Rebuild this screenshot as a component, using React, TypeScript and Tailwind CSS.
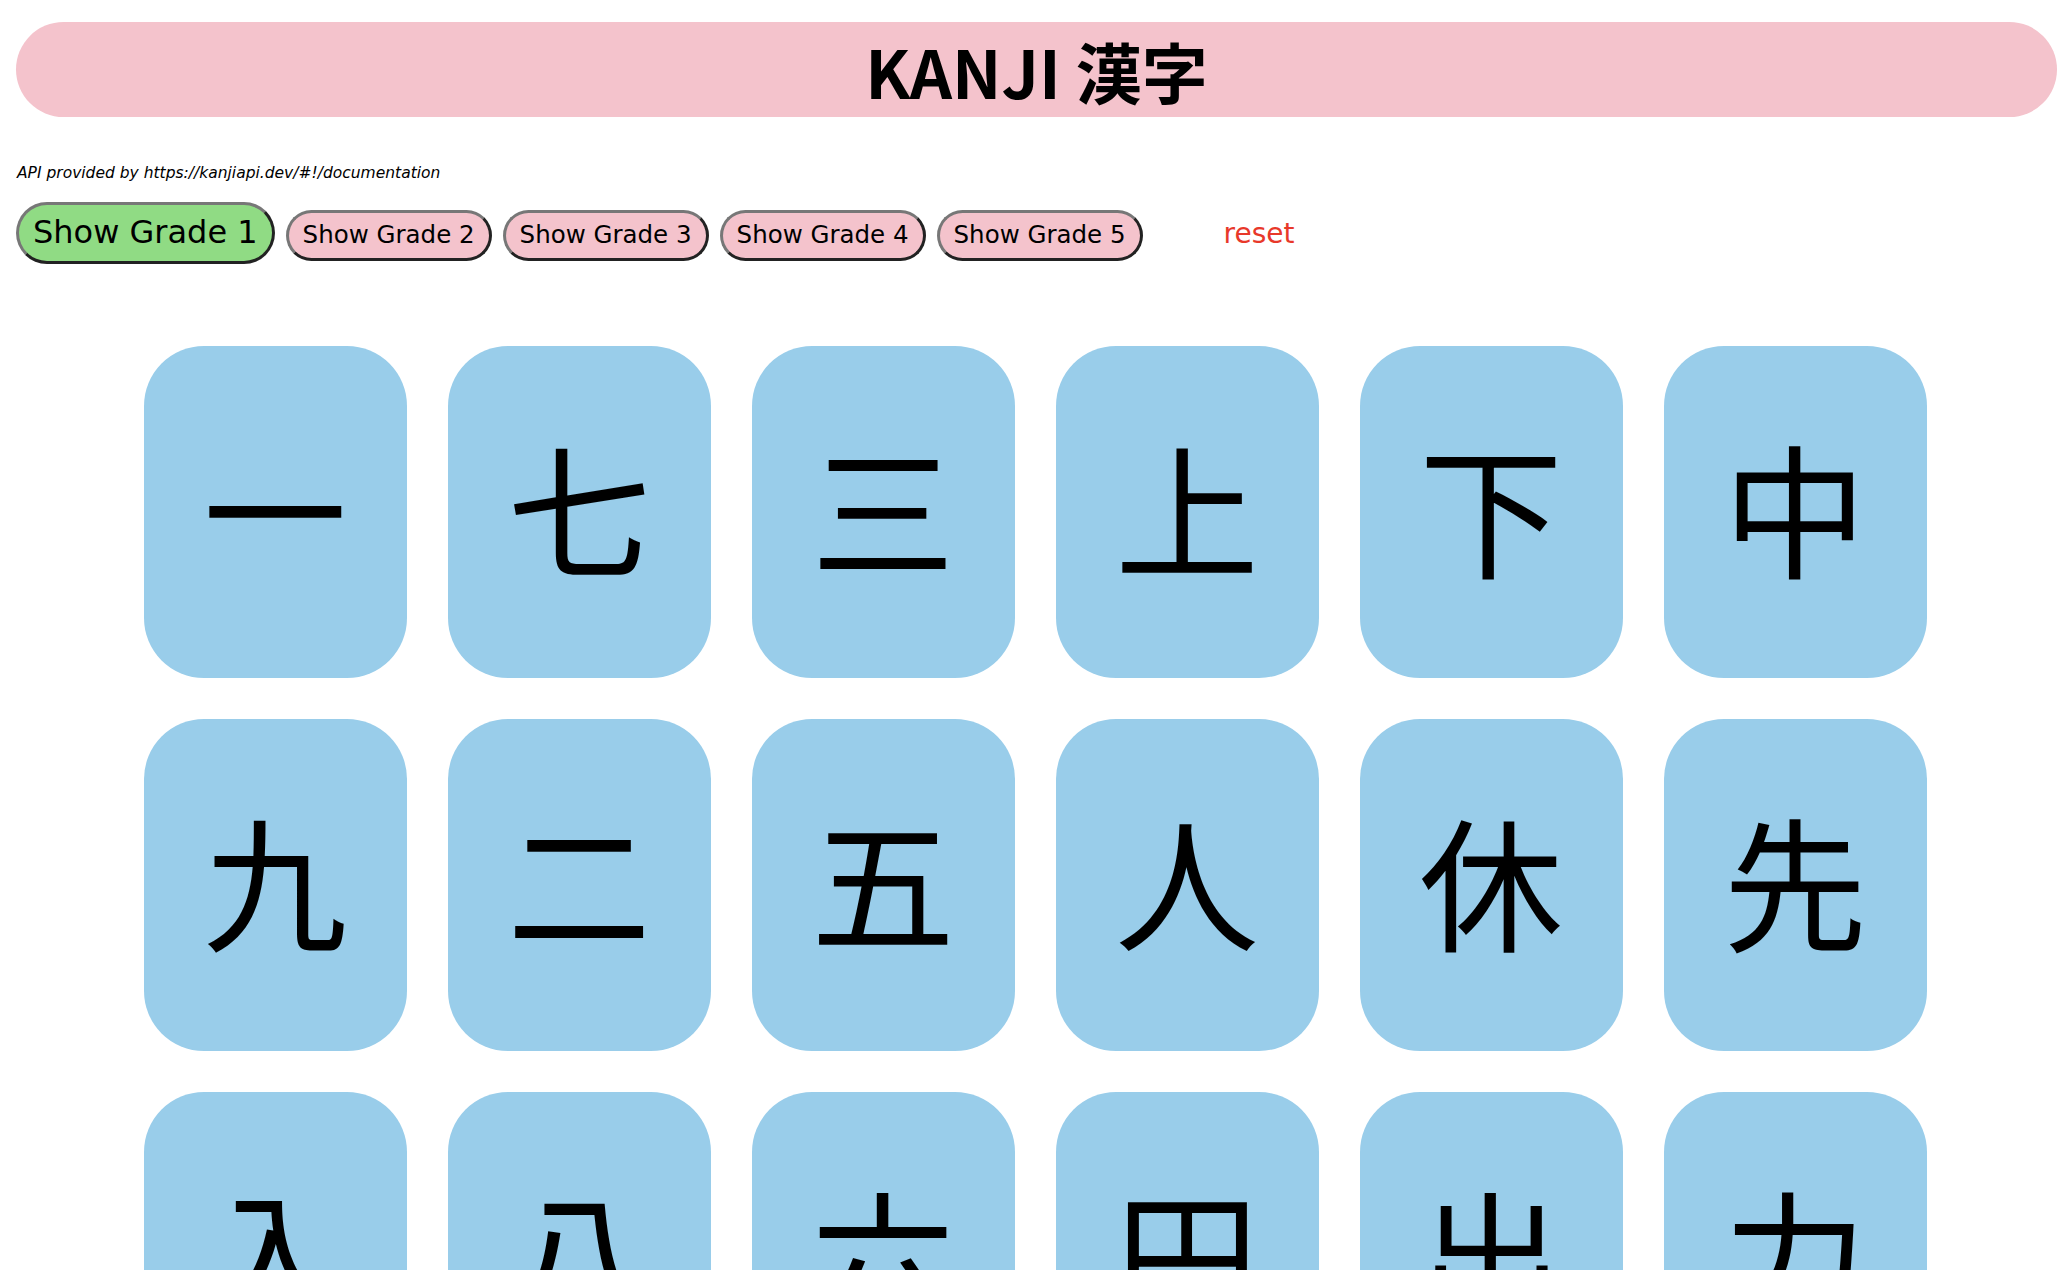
import React, { useState } from "react";

const grades = [1, 2, 3, 4, 5];

const kanjiList = [
  "一", "七", "三", "上", "下", "中",
  "九", "二", "五", "人", "休", "先",
  "入", "八", "六", "円", "出", "力",
];

const cjk = "font-['Noto_Sans_CJK_JP',sans-serif]";
const latin = "font-['DejaVu_Sans','Noto_Sans_CJK_JP',sans-serif]";

export default function App() {
  const [grade, setGrade] = useState<number | null>(1);

  return (
    <div className={`min-h-screen bg-white pb-10 text-black ${cjk}`}>
      <header className="ml-[16px] mr-[13px] mt-[22px] flex h-[95px] items-center justify-center rounded-full bg-[#f4c3cc]">
        <h1 className="text-[66px] font-bold leading-none">KANJI 漢字</h1>
      </header>

      <p className={`ml-[17px] mt-[47px] text-[15.5px] italic leading-[18px] ${latin}`}>
        API provided by https://kanjiapi.dev/#!/documentation
      </p>

      <div className={`ml-[16px] mt-[20px] flex items-baseline gap-[11px] ${latin}`}>
        {grades.map((g) =>
          g === grade ? (
            <button
              key={g}
              onClick={() => setGrade(g)}
              className="h-[62px] rounded-full border-[3px] border-b-[#222] border-l-[#777] border-r-[#222] border-t-[#777] bg-[#90db84] px-[14px] py-[9px] text-[32px] leading-[1.164]"
            >
              Show Grade {g}
            </button>
          ) : (
            <button
              key={g}
              onClick={() => setGrade(g)}
              className="h-[51px] rounded-full border-[3px] border-b-[#222] border-l-[#777] border-r-[#222] border-t-[#777] bg-[#f4c3cc] px-[14px] py-[8px] text-[24.5px] leading-[1.164]"
            >
              Show Grade {g}
            </button>
          )
        )}
        <button
          onClick={() => setGrade(null)}
          className="ml-[70px] text-[28px] leading-[1.164] text-[#e8382a]"
        >
          reset
        </button>
      </div>

      <div className="mx-auto mt-[82px] grid w-fit grid-cols-[repeat(6,263px)] gap-[41px]">
        {kanjiList.map((k) => (
          <div
            key={k}
            className="flex h-[332px] items-center justify-center rounded-[60px] bg-[#99cdea] pb-[14px] text-[144px] leading-none"
          >
            {k}
          </div>
        ))}
      </div>
    </div>
  );
}
